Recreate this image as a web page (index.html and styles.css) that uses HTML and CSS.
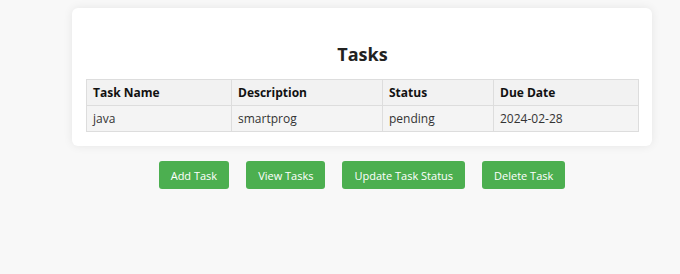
FILE: index.html
```html
<!DOCTYPE html>
<html lang="en">
<head>
  <meta charset="UTF-8">
  <meta name="viewport" content="width=device-width, initial-scale=1.0">
  <title>Task Manager</title>
  <link rel="stylesheet" href="styles.css">
</head>
<body>
  <div class="page">
    <div class="container">
      <h1>Tasks</h1>
      <table class="task-table">
        <thead>
          <tr>
            <th class="col-name">Task Name</th>
            <th class="col-desc">Description</th>
            <th class="col-status">Status</th>
            <th>Due Date</th>
          </tr>
        </thead>
        <tbody>
          <tr>
            <td>java</td>
            <td>smartprog</td>
            <td>pending</td>
            <td>2024-02-28</td>
          </tr>
        </tbody>
      </table>
    </div>

    <!-- Actions -->
    <div class="actions">
      <button class="btn">Add Task</button>
      <button class="btn">View Tasks</button>
      <button class="btn">Update Task Status</button>
      <button class="btn">Delete Task</button>
    </div>
  </div>
</body>
</html>
```

FILE: styles.css
```css
body {
  font-family: "Open Sans", "Noto Sans", Arial, sans-serif;
  margin: 0;
  padding: 0;
  background-color: #f8f8f8;
  color: #222;
}

.page {
  width: 580px;
  margin-left: 72px;
  padding-top: 8px;
}

.container {
  background: #fff;
  border-radius: 6px;
  box-shadow: 0 0 10px rgba(0, 0, 0, 0.08);
  padding: 26px 13px 14px 14px;
}

h1 {
  font-size: 18px;
  font-weight: bold;
  text-align: center;
  color: #222;
  margin: 8px 0 13px;
  line-height: 24px;
}

.task-table {
  width: 100%;
  table-layout: fixed;
  border-collapse: collapse;
  font-size: 12px;
}

.task-table th,
.task-table td {
  box-sizing: border-box;
  border: 1px solid #ddd;
  padding: 0 6px;
  height: 26px;
  text-align: left;
}

.task-table th {
  background-color: #f2f2f2;
  font-weight: bold;
  color: #111;
}

.task-table td {
  background-color: #f4f4f4;
  color: #333;
}

.col-name {
  width: 145px;
}

.col-desc {
  width: 151px;
}

.col-status {
  width: 111px;
}

.actions {
  display: flex;
  justify-content: center;
  gap: 17px;
  margin-top: 15px;
}

.btn {
  font-family: inherit;
  font-size: 11px;
  background-color: #4caf50;
  color: #fff;
  border: none;
  border-radius: 3px;
  height: 28px;
  padding: 0 12px;
  cursor: pointer;
}

.btn:hover {
  background-color: #45a049;
}
```
